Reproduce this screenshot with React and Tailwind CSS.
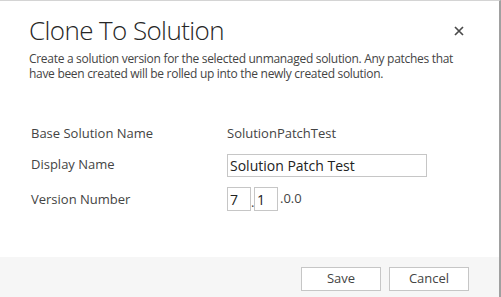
export default function App() {
    const font = { fontFamily: '"Open Sans", "Noto Sans", sans-serif' };

    return (
        <div
            className="w-[501px] h-[297px] flex flex-col bg-white border-t border-t-[#d4d4d4] border-r-2 border-r-[#a0a0a0] text-[#444444]"
            style={font}
        >
            <div className="flex-1 pl-[29px] pr-[32px]">
                <div className="flex items-start justify-between pt-[11px]">
                    <h1 className="text-[26px] leading-[36px] font-light text-[#262626] tracking-[-0.6px]">
                        Clone To Solution
                    </h1>
                    <button className="mt-[13px] mr-[2px] w-[12px] h-[12px] flex items-center justify-center text-[#4a4a4a]">
                        <svg width="10" height="10" viewBox="0 0 10 10">
                            <path d="M1 1 L9 9 M9 1 L1 9" stroke="currentColor" strokeWidth="1.7" />
                        </svg>
                    </button>
                </div>
                <div className="mt-[3px] text-[12px] leading-[15px] text-[#444444] tracking-[-0.3px] whitespace-nowrap">
                    <p>Create a solution version for the selected unmanaged solution. Any patches that</p>
                    <p>have been created will be rolled up into the newly created solution.</p>
                </div>

                <div className="mt-[41px] pl-[2px] grid grid-cols-[196px_1fr] text-[13px] text-[#444444] gap-y-[8px] items-center">
                    <div className="leading-[22px]">Base Solution Name</div>
                    <div className="leading-[22px]">SolutionPatchTest</div>

                    <div className="leading-[23px] -mt-[1px]">Display Name</div>
                    <div className="mt-[2px]">
                        <input
                            type="text"
                            defaultValue="Solution Patch Test"
                            className="w-[200px] h-[23px] border border-[#c6c6c6] px-[2px] text-[14px] text-[#222222] outline-none"
                            style={font}
                        />
                    </div>

                    <div className="leading-[23px] mt-[3px]">Version Number</div>
                    <div className="flex items-end mt-[2px]">
                        <input
                            type="text"
                            defaultValue="7"
                            className="w-[24px] h-[24px] border border-[#c6c6c6] px-[2px] text-[14px] text-[#222222] outline-none"
                            style={font}
                        />
                        <span className="w-[3px] text-[13px] leading-[18px]">.</span>
                        <input
                            type="text"
                            defaultValue="1"
                            className="w-[24px] h-[24px] border border-[#c6c6c6] px-[2px] text-[14px] text-[#222222] outline-none"
                            style={font}
                        />
                        <span className="ml-[2px] text-[13px] leading-[22px] self-start">.0.0</span>
                    </div>
                </div>
            </div>

            <div className="h-[40px] bg-[#f6f6f6] flex justify-end items-start pt-[10px] pr-[30px] gap-[8px]">
                <button className="w-[80px] h-[24px] border border-[#c6c6c6] bg-white text-[13px] text-[#444444]">
                    Save
                </button>
                <button className="w-[80px] h-[24px] border border-[#c6c6c6] bg-white text-[13px] text-[#444444]">
                    Cancel
                </button>
            </div>
        </div>
    );
}
